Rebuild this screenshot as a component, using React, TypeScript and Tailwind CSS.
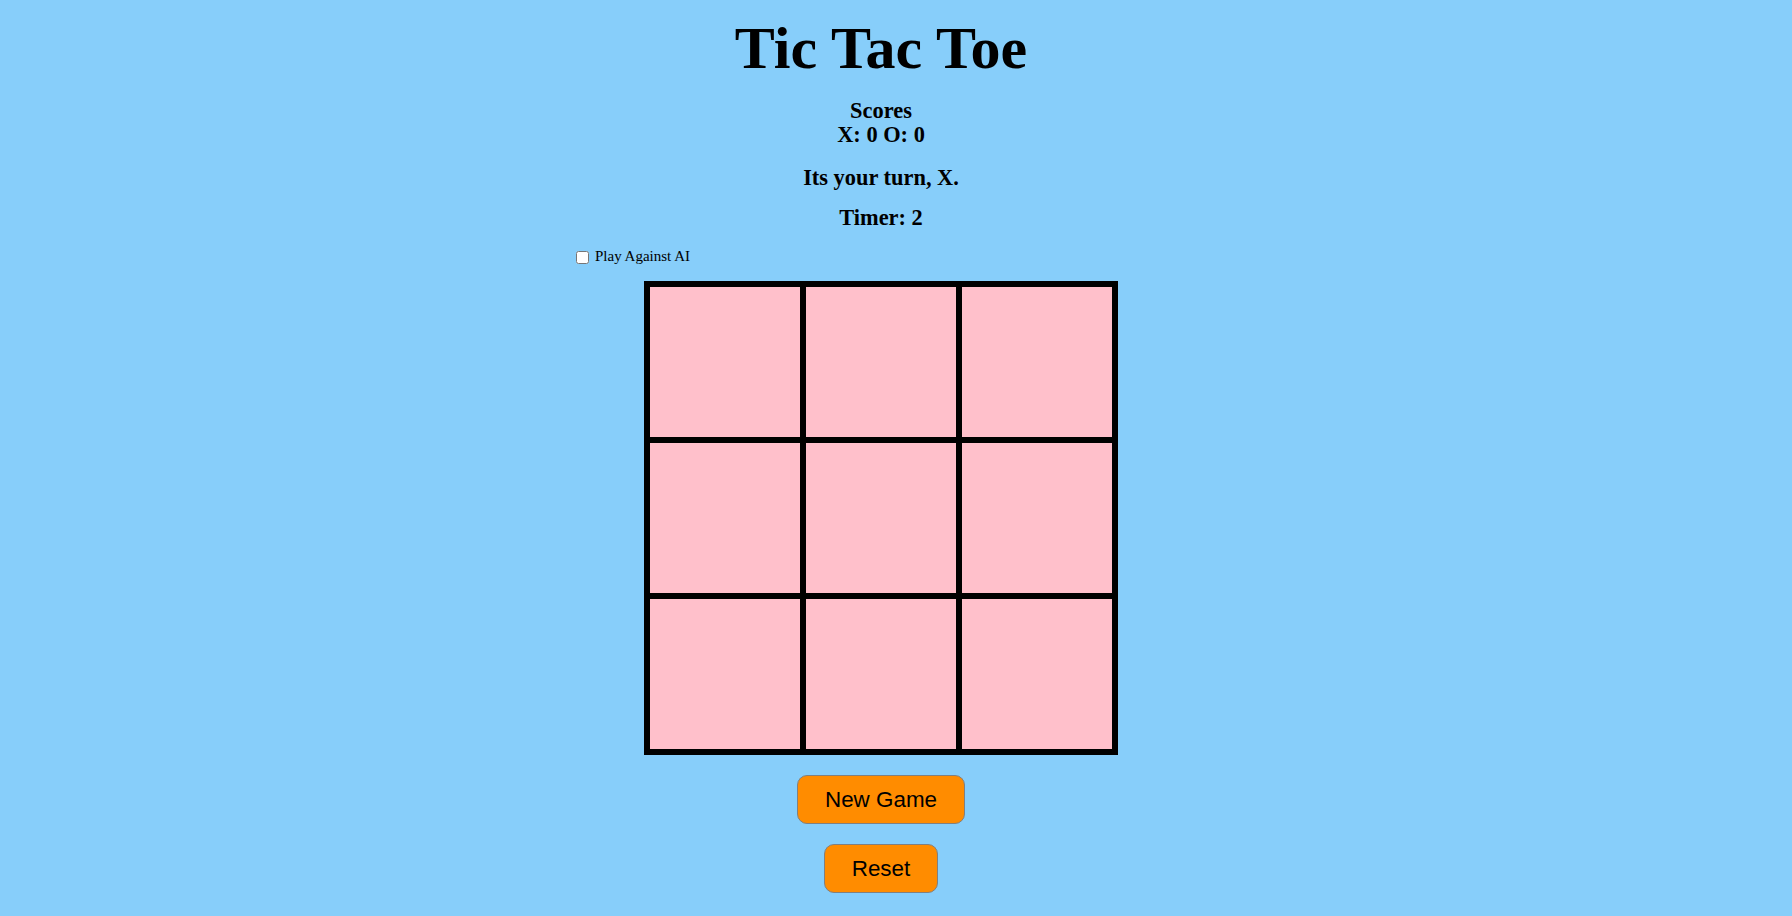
import React, { useState } from "react";

export default function App() {
  const [ai, setAi] = useState(false);
  const cells = Array.from({ length: 9 });
  return (
    <div className="min-h-screen w-full bg-[#87cefa]">
      <div className="flex w-[1762px] flex-col items-center pt-[16px] text-black font-['Liberation_Serif','Times_New_Roman',serif]">
        <h1 className="text-[60px] font-bold leading-[64px]">Tic Tac Toe</h1>
        <div className="mt-[19px] flex flex-col items-center text-[22.4px] font-bold leading-[24px]">
          <div>Scores</div>
          <div>X: 0 O: 0</div>
        </div>
        <div className="mt-[19px] text-[22.4px] font-bold leading-[24px]">Its your turn, X.</div>
        <div className="mt-[16px] text-[22.4px] font-bold leading-[24px]">Timer: 2</div>
        <div className="mt-[18px] flex w-[610px] items-start">
          <label className="flex items-start text-[15px] leading-[17px]">
            <input
              type="checkbox"
              checked={ai}
              onChange={(e) => setAi(e.target.checked)}
              className="m-0 mt-[3px] h-[13px] w-[13px]"
            />
            <span className="ml-[6px]">Play Against AI</span>
          </label>
        </div>
        <div className="mt-[16px] grid grid-cols-3 border-[3px] border-black">
          {cells.map((_, i) => (
            <div key={i} className="h-[156px] w-[156px] border-[3px] border-black bg-[#ffc0cb]" />
          ))}
        </div>
        <button className="mt-[20px] flex h-[49px] items-center rounded-[10px] border border-[#808080] bg-[#ff8c00] px-[27px] font-['Liberation_Sans',Arial,sans-serif] text-[22.4px] text-black">
          New Game
        </button>
        <button className="mt-[20px] flex h-[49px] items-center rounded-[10px] border border-[#808080] bg-[#ff8c00] px-[27px] font-['Liberation_Sans',Arial,sans-serif] text-[22.4px] text-black">
          Reset
        </button>
      </div>
    </div>
  );
}
